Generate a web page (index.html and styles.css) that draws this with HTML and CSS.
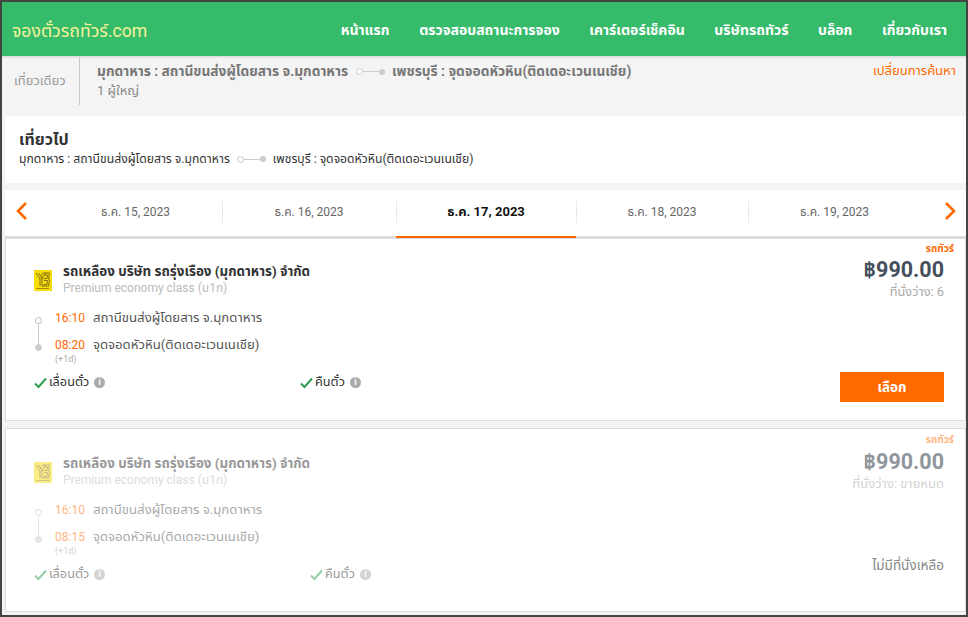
FILE: index.html
```html
<!DOCTYPE html>
<html lang="th">
<head>
    <meta charset="UTF-8">
    <link rel="stylesheet" href="styles.css">
</head>
<body>
    <div class="page">
        <div class="topbar">
            <div class="brand">จองตั๋วรถทัวร์.com</div>
            <div class="nav">
                <a>หน้าแรก</a>
                <a>ตรวจสอบสถานะการจอง</a>
                <a>เคาร์เตอร์เช็คอิน</a>
                <a>บริษัทรถทัวร์</a>
                <a>บล็อก</a>
                <a>เกี่ยวกับเรา</a>
            </div>
        </div>

        <div class="summary">
            <div class="trip-type">เที่ยวเดียว</div>
            <div class="summary-info">
                <div class="route route-main">
                    <span>มุกดาหาร : สถานีขนส่งผู้โดยสาร จ.มุกดาหาร</span>
                    <span class="route-line"><i class="dot-open"></i><i class="bar"></i><i class="dot-full"></i></span>
                    <span>เพชรบุรี : จุดจอดหัวหิน(ติดเดอะเวนเนเชีย)</span>
                </div>
                <div class="pax">1 ผู้ใหญ่</div>
            </div>
            <a class="change">เปลี่ยนการค้นหา</a>
        </div>

        <div class="leg">
            <div class="leg-title">เที่ยวไป</div>
            <div class="route">
                <span>มุกดาหาร : สถานีขนส่งผู้โดยสาร จ.มุกดาหาร</span>
                <span class="route-line"><i class="dot-open"></i><i class="bar"></i><i class="dot-full"></i></span>
                <span>เพชรบุรี : จุดจอดหัวหิน(ติดเดอะเวนเนเชีย)</span>
            </div>
        </div>

        <div class="dates">
            <svg class="arrow" width="12" height="18" viewBox="0 0 12 18"><path d="M10 1 L2 9 L10 17" fill="none" stroke="#ff6a00" stroke-width="2.6"/></svg>
            <div class="date-tabs">
                <div class="tab">ธ.ค. 15, 2023</div>
                <div class="tab">ธ.ค. 16, 2023</div>
                <div class="tab active">ธ.ค. 17, 2023</div>
                <div class="tab">ธ.ค. 18, 2023</div>
                <div class="tab">ธ.ค. 19, 2023</div>
            </div>
            <svg class="arrow" width="12" height="18" viewBox="0 0 12 18"><path d="M2 1 L10 9 L2 17" fill="none" stroke="#ff6a00" stroke-width="2.6"/></svg>
        </div>

        <div class="card card-first">
            <div class="card-main">
                <div class="operator">
                    <svg class="logo" width="18" height="21" viewBox="0 0 18 21">
                        <rect width="18" height="21" fill="#f5dc0a"/>
                        <path d="M2 3 L6 9 L6 16 M4.500 3 L8 8.500 L8 16 M12 3 L7 9.500 M9 3 L6.500 6.500 M9 3 H15.500 L14.500 9 L15.500 10 L14.500 16 H8 M10 5 H13.500 L13 8.500 H9.500 M10 10.500 H13.500 L13 14.500 H9.500" fill="none" stroke="#7a6512" stroke-width="0.9"/>
                        <path d="M2.500 18.500 H15.500" stroke="#8a7610" stroke-width="1" stroke-dasharray="2 0.6"/>
                    </svg>
                    <div>
                        <div class="op-name">รถเหลือง บริษัท รถรุ่งเรือง (มุกดาหาร) จำกัด</div>
                        <div class="op-class">Premium economy class (ม1ก)</div>
                    </div>
                </div>
                <div class="stops">
                    <div class="stop">
                        <i class="stop-dot"></i><span class="time">16:10</span><span>สถานีขนส่งผู้โดยสาร จ.มุกดาหาร</span>
                    </div>
                    <div class="stop stop-end">
                        <i class="stop-dot"></i><span class="time">08:20</span><span>จุดจอดหัวหิน(ติดเดอะเวนเนเชีย)</span>
                    </div>
                    <div class="next-day">(+1d)</div>
                </div>
                <div class="policies">
                    <div class="policy">
                        <svg class="check" width="13" height="12" viewBox="0 0 13 12"><path d="M1 6.500 L4.500 10 L12 1.500" fill="none" stroke="#2f9e50" stroke-width="2"/></svg>
                        <span>เลื่อนตั๋ว</span><i class="info">i</i>
                    </div>
                    <div class="policy">
                        <svg class="check" width="13" height="12" viewBox="0 0 13 12"><path d="M1 6.500 L4.500 10 L12 1.500" fill="none" stroke="#2f9e50" stroke-width="2"/></svg>
                        <span>คืนตั๋ว</span><i class="info">i</i>
                    </div>
                </div>
            </div>
            <div class="card-side">
                <div class="tag">รถทัวร์</div>
                <div class="price">฿990.00</div>
                <div class="seats">ที่นั่งว่าง: 6</div>
                <a class="select-btn">เลือก</a>
            </div>
        </div>

        <div class="card card-soldout">
            <div class="card-main">
                <div class="operator">
                    <svg class="logo" width="18" height="21" viewBox="0 0 18 21">
                        <rect width="18" height="21" fill="#f5dc0a"/>
                        <path d="M2 3 L6 9 L6 16 M4.500 3 L8 8.500 L8 16 M12 3 L7 9.500 M9 3 L6.500 6.500 M9 3 H15.500 L14.500 9 L15.500 10 L14.500 16 H8 M10 5 H13.500 L13 8.500 H9.500 M10 10.500 H13.500 L13 14.500 H9.500" fill="none" stroke="#7a6512" stroke-width="0.9"/>
                        <path d="M2.500 18.500 H15.500" stroke="#8a7610" stroke-width="1" stroke-dasharray="2 0.6"/>
                    </svg>
                    <div>
                        <div class="op-name">รถเหลือง บริษัท รถรุ่งเรือง (มุกดาหาร) จำกัด</div>
                        <div class="op-class">Premium economy class (ม1ก)</div>
                    </div>
                </div>
                <div class="stops">
                    <div class="stop">
                        <i class="stop-dot"></i><span class="time">16:10</span><span>สถานีขนส่งผู้โดยสาร จ.มุกดาหาร</span>
                    </div>
                    <div class="stop stop-end">
                        <i class="stop-dot"></i><span class="time">08:15</span><span>จุดจอดหัวหิน(ติดเดอะเวนเนเชีย)</span>
                    </div>
                    <div class="next-day">(+1d)</div>
                </div>
                <div class="policies">
                    <div class="policy">
                        <svg class="check" width="13" height="12" viewBox="0 0 13 12"><path d="M1 6.500 L4.500 10 L12 1.500" fill="none" stroke="#2f9e50" stroke-width="2"/></svg>
                        <span>เลื่อนตั๋ว</span><i class="info">i</i>
                    </div>
                    <div class="policy">
                        <svg class="check" width="13" height="12" viewBox="0 0 13 12"><path d="M1 6.500 L4.500 10 L12 1.500" fill="none" stroke="#2f9e50" stroke-width="2"/></svg>
                        <span>คืนตั๋ว</span><i class="info">i</i>
                    </div>
                </div>
            </div>
            <div class="card-side">
                <div class="tag">รถทัวร์</div>
                <div class="price">฿990.00</div>
                <div class="seats">ที่นั่งว่าง: ขายหมด</div>
                <div class="no-seat">ไม่มีที่นั่งเหลือ</div>
            </div>
        </div>
    </div>
</body>
</html>
```

FILE: styles.css
```css
* {
    box-sizing: border-box;
}
html, body {
    margin: 0;
    height: 100%;
    overflow: hidden;
}
body {
    font-family: Roboto, "Noto Sans Thai", Tahoma, "Noto Sans", "DejaVu Sans", sans-serif;
    font-size: 12px;
    color: #333;
    background-color: #444;
}
i {
    font-style: normal;
}
.page {
    height: 613px;
    margin: 2px 2px 0 2px;
    background-color: #f3f3f6;
}

/* top bar */
.topbar {
    height: 54px;
    padding: 2px 10px 0;
    display: flex;
    align-items: center;
    justify-content: space-between;
    background-color: #36bb6a;
}
.brand {
    font-size: 17.600px;
    padding-top: 2px;
    color: #f4f29a;
}
.nav {
    display: flex;
    gap: 29.600px;
    margin-right: 9px;
    color: #fff;
    font-size: 14px;
    font-weight: bold;
}

/* search summary */
.summary {
    height: 60px;
    display: flex;
    align-items: flex-start;
    background-color: #f4f4f4;
    box-shadow: inset 0 3px 3px -2px rgba(0, 0, 0, 0.15);
}
.trip-type {
    width: 78px;
    height: 48px;
    margin-top: 1px;
    padding-left: 12px;
    line-height: 48px;
    border-right: 1px solid #c4c8cc;
    color: #999;
    font-size: 13px;
}
.summary-info {
    flex: 1;
    padding: 5px 0 0 17px;
}
.route {
    display: flex;
    align-items: center;
    gap: 7px;
    font-size: 12.200px;
    color: #333;
}
.route-main {
    gap: 7.500px;
    font-size: 13.750px;
    font-weight: bold;
    color: #777;
}
.route-line {
    display: flex;
    align-items: center;
}
.dot-open {
    width: 7px;
    height: 7px;
    border: 1px solid #ccc;
    border-radius: 50%;
    background-color: #fff;
}
.bar {
    width: 16px;
    height: 1px;
    background-color: #ccc;
}
.dot-full {
    width: 6px;
    height: 6px;
    border-radius: 50%;
    background-color: #ccc;
}
.pax {
    margin-top: -1px;
    color: #888;
    font-size: 13px;
}
.change {
    margin: 5px 10px 0 0;
    color: #ff6a00;
    font-size: 13px;
}

/* leg heading */
.leg {
    height: 67px;
    margin: 0 0 7px 3px;
    padding: 14px 14px 0;
    background-color: #fff;
}
.leg-title {
    font-size: 16px;
    font-weight: bold;
    line-height: 20px;
    color: #333;
}

/* date tabs */
.dates {
    height: 48px;
    margin-left: 3px;
    display: flex;
    justify-content: space-between;
    padding: 0 11px;
    border-bottom: 2px solid #ddd;
    background-color: #fff;
}
.arrow {
    flex: none;
    margin-top: 12px;
}
.date-tabs {
    flex: none;
    display: grid;
    grid-template-columns: 173px 174px 180px 172px 173px;
    margin-left: 21px;
    margin-right: 23px;
}
.tab {
    height: 46px;
    padding-top: 7px;
    text-align: center;
    line-height: 30px;
    color: #666;
    position: relative;
}
.tab + .tab::before {
    content: "";
    position: absolute;
    left: 0;
    top: 11px;
    height: 22px;
    border-left: 1px solid #e8e8e8;
}
.tab.active {
    height: 48px;
    border-bottom: 2px solid #ff6a00;
    color: #111;
    font-size: 13px;
    font-weight: bold;
}

/* trip cards */
.card {
    margin: 0 0 7px 3px;
    padding: 27px 21px 18px 28px;
    display: flex;
    justify-content: space-between;
    height: 184px;
    border: 1px solid #ddd;
    background-color: #fff;
}
.card-first {
    height: 183px;
    padding-top: 25px;
}
.card-main {
    flex: 1;
}
.operator {
    display: flex;
    align-items: center;
    gap: 11px;
}
.logo {
    flex: none;
}
.op-name {
    font-size: 13.400px;
    font-weight: bold;
    line-height: 16px;
    color: #333;
}
.op-class {
    line-height: 16px;
    color: #bbb;
}
.stops {
    margin-top: 8px;
}
.stop {
    height: 27px;
    display: flex;
    align-items: center;
    gap: 8px;
    position: relative;
    padding-left: 21px;
    color: #555;
    font-size: 13.200px;
}
.stop-dot {
    position: absolute;
    left: 1px;
    top: 13px;
    width: 7px;
    height: 7px;
    border: 1px solid #bbb;
    border-radius: 50%;
    background-color: #fff;
}
.stop:first-child::after {
    content: "";
    position: absolute;
    left: 4px;
    top: 20px;
    height: 20px;
    border-left: 1px solid #ccc;
}
.stop-end .stop-dot {
    background-color: #ccc;
    border-color: #ccc;
}
.time {
    color: #ff6a00;
    font-size: 12px;
}
.next-day {
    padding-left: 21px;
    margin-top: -4px;
    font-size: 9px;
    color: #aaa;
}
.policies {
    display: flex;
    margin-top: 9px;
}
.policy {
    width: 266px;
    display: flex;
    align-items: center;
    gap: 2px;
    color: #333;
    font-size: 12.700px;
}
.check {
    flex: none;
}
.info {
    width: 11px;
    height: 11px;
    margin-left: 3px;
    border-radius: 50%;
    background-color: #aaa;
    color: #fff;
    font-size: 9px;
    font-weight: bold;
    line-height: 11px;
    text-align: center;
}
.card-side {
    width: 200px;
    margin-top: -23px;
    display: flex;
    flex-direction: column;
    align-items: flex-end;
}
.card-first .card-side {
    margin-top: -22px;
}
.tag {
    margin-right: -10px;
    font-size: 10px;
    font-weight: bold;
    line-height: 14px;
    color: #ff6a00;
}
.price {
    font-size: 21.500px;
    font-weight: bold;
    line-height: 27px;
    color: #46505c;
}
.seats {
    margin-top: 1px;
    font-size: 12.800px;
    line-height: 16px;
    color: #aaa;
}
.select-btn {
    width: 104px;
    height: 30px;
    margin-top: auto;
    line-height: 30px;
    text-align: center;
    background-color: #ff6a00;
    color: #fff;
    font-size: 13.500px;
    font-weight: bold;
}
.no-seat {
    margin-top: auto;
    margin-bottom: 17px;
    font-size: 13.500px;
    color: #888;
}

/* sold out: same card, faded */
.card-soldout .operator,
.card-soldout .stops,
.card-soldout .policies,
.card-soldout .tag,
.card-soldout .seats {
    opacity: 0.5;
}
.card-soldout .price {
    margin-top: 1px;
    opacity: 0.6;
}
.card-soldout .seats {
    font-size: 13px;
}
.card-soldout .policy + .policy {
    margin-left: 10px;
}
```
